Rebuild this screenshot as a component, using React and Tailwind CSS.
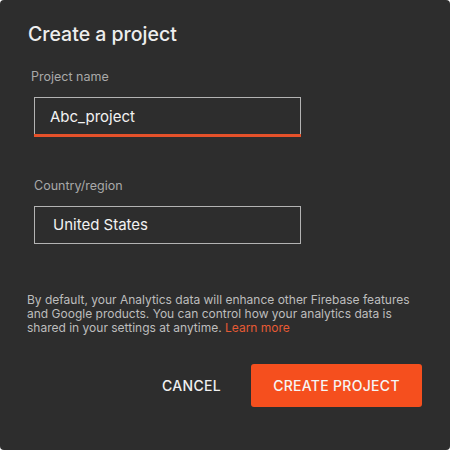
import React from "react";

const App = () => {
  return (
    <div className="w-[450px] h-[450px] bg-white" style={{ fontFamily: "Inter, 'Noto Sans', sans-serif" }}>
      <div className="h-full rounded-[4px] bg-[#2d2d2d] px-[28px] pt-[21px] flex flex-col">
        <h2 className="text-[19.5px] leading-[26px] font-medium text-[#eeeeee]">
          Create a project
        </h2>

        {/* project name */}
        <label className="mt-[22px] ml-[3px] text-[12.5px] leading-[16px] text-[#a9a9a9]">
          Project name
        </label>
        <div className="mt-[12px] ml-[6px] w-[267px] h-[40px] border border-[#b3b3b3] border-b-0 flex flex-col">
          <div className="flex-1 flex items-center pl-[15px] pt-[3px] text-[15px] text-[#f2f2f2]">
            Abc_project
          </div>
          <div className="h-[3px] -mx-[1px] bg-[#e5512a]" />
        </div>

        {/* country */}
        <label className="mt-[41px] ml-[6px] text-[12.5px] leading-[16px] text-[#a9a9a9]">
          Country/region
        </label>
        <div className="mt-[12px] ml-[6px] w-[267px] h-[38px] border border-[#b3b3b3] flex items-center pl-[18px] pt-[1px] text-[15px] text-[#f2f2f2]">
          United States
        </div>

        <p className="mt-[49px] -ml-[1px] text-[12px] leading-[14px] text-[#bdbdbd]">
          By default, your Analytics data will enhance other Firebase features
          and Google products. You can control how your analytics data is
          shared in your settings at anytime.{" "}
          <span className="text-[#e65a34]">Learn more</span>
        </p>

        <div className="mt-[29px] flex justify-end items-center">
          <button className="mr-[30px] text-[14px] font-medium tracking-[0.3px] text-[#f0f0f0]">
            CANCEL
          </button>
          <button className="w-[171px] h-[43px] rounded-[3px] bg-[#f54f1e] text-[14px] font-medium tracking-[0.3px] text-[#f5f5f5]">
            CREATE PROJECT
          </button>
        </div>
      </div>
    </div>
  );
};

export default App;
